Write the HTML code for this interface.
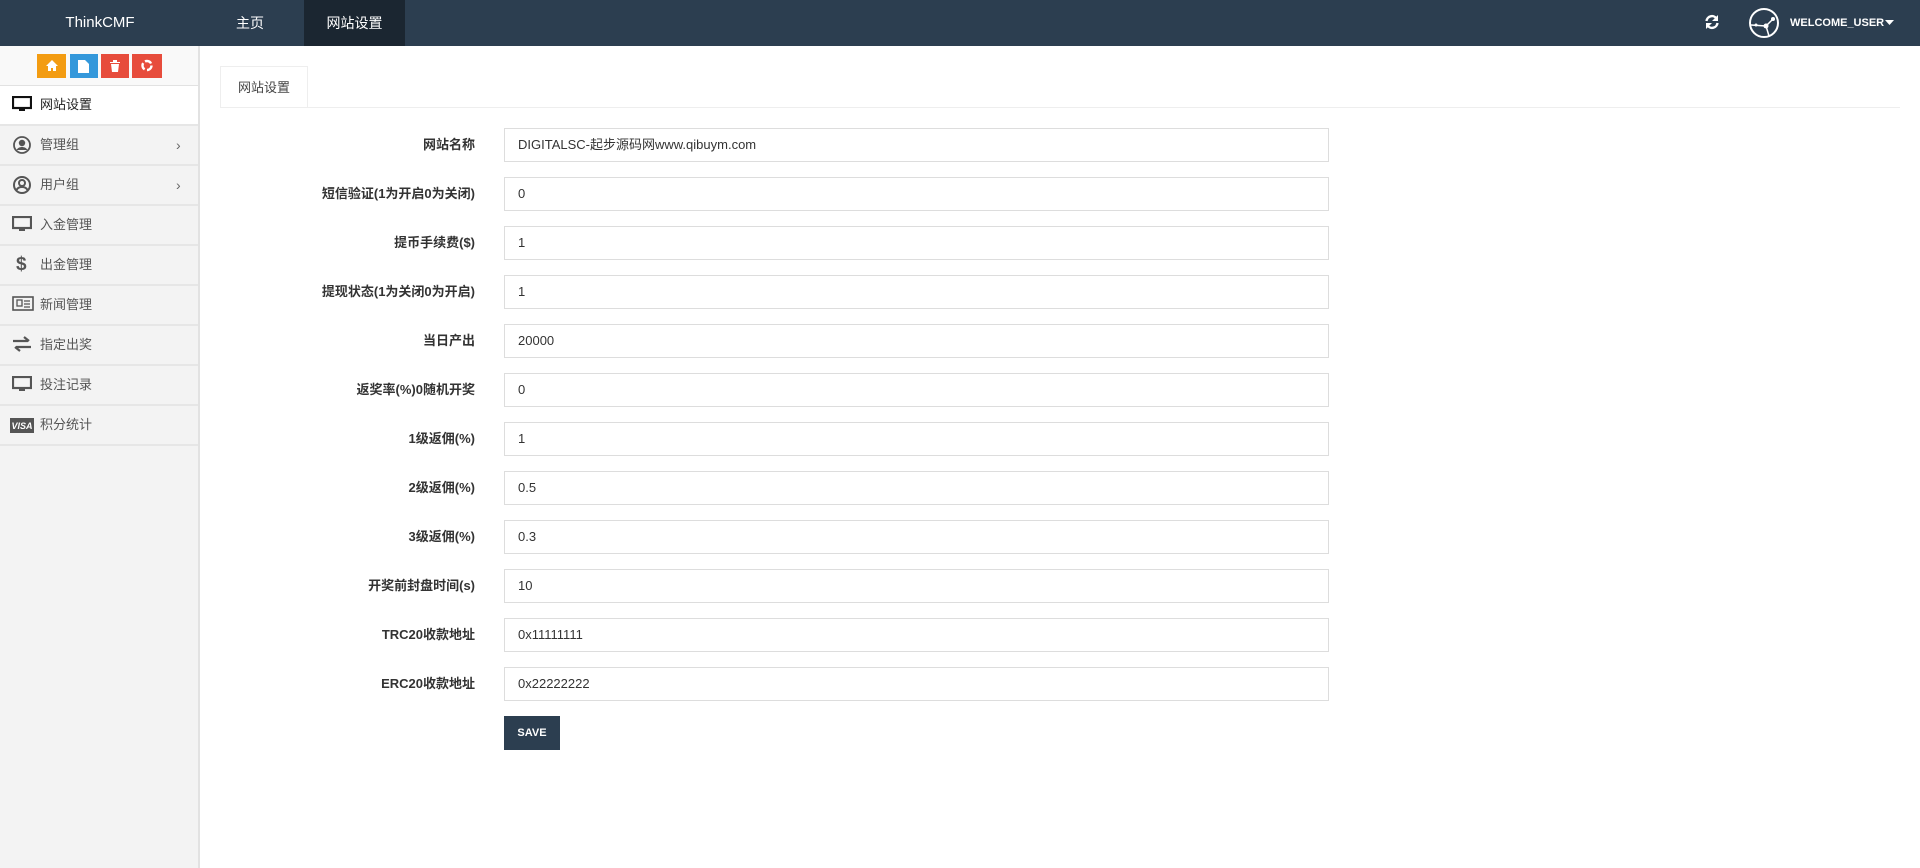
<!DOCTYPE html>
<html><head><meta charset="utf-8"><style>
*{margin:0;padding:0;box-sizing:border-box}
body{width:1920px;height:868px;overflow:hidden;background:#fff;font-family:"Liberation Sans","Noto Sans CJK SC",sans-serif;font-size:13px;color:#333;position:relative}
.hd{position:absolute;left:0;top:0;width:1920px;height:46px;background:#2c3e50}
.hd .logo{position:absolute;left:0;width:200px;top:0;line-height:46px;text-align:center;color:#fff;font-size:15px}
.hd .nav{position:absolute;top:0;height:46px;line-height:46px;color:#fff;font-size:14px;text-align:center}
.sb{position:absolute;left:0;top:46px;width:200px;height:822px;background:#f3f3f3;border-right:2px solid #e2e2e2}
.btns{height:40px;background:#f9f9f9;position:relative;border-bottom:1px solid #e2e2e2}
.btns span{position:absolute;top:8px;height:24px;width:29px}
.mi{height:40px;border-bottom:2px solid #e6e6e6;position:relative;font-size:13px;color:#555;line-height:38px;padding-left:40px}
.mi.act{background:#fff;color:#222}
.mi svg{position:absolute;left:12px;top:10px}
.mi .ar{position:absolute;left:176px;top:0;color:#666;font-size:14px}
.tab{position:absolute;left:220px;top:66px;width:88px;height:42px;border:1px solid #eee;border-bottom:1px solid #fff;background:#fff;text-align:center;line-height:42px;font-size:13px;color:#444}
.tline{position:absolute;left:220px;top:107px;width:1680px;height:1px;background:#eee}
.lb{position:absolute;right:1445px;font-weight:bold;font-size:13px;color:#333;line-height:34px;white-space:nowrap}
.in{position:absolute;left:504px;width:825px;height:34px;border:1px solid #ddd;line-height:32px;padding-left:13px;font-size:13px;color:#333}
.save{position:absolute;left:504px;top:716px;width:56px;height:34px;background:#2c3e50;color:#fff;font-weight:bold;font-size:11px;text-align:center;line-height:34px}
</style></head><body>
<div class="hd">
<div class="logo">ThinkCMF</div>
<div class="nav" style="left:220px;width:60px">主页</div>
<div class="nav" style="left:304px;width:101px;background:#1b2631">网站设置</div>
<svg style="position:absolute;left:1704px;top:14px" width="16" height="16" viewBox="0 0 16 16"><path d="M2.5 7A5.5 5.5 0 0 1 12.5 4.5M13.5 9A5.5 5.5 0 0 1 3.5 11.5" stroke="#fff" stroke-width="2.4" fill="none"/><path d="M14 1v6h-6zM2 15v-6h6z" fill="#fff"/></svg>
<svg style="position:absolute;left:1748px;top:7px" width="32" height="32" viewBox="0 0 32 32"><circle cx="16" cy="16" r="14" stroke="#fff" stroke-width="2" fill="none"/><path d="M3 18L18 19M18 19L25 12M18 19L21 29" stroke="#fff" stroke-width="1.5" fill="none"/><circle cx="18" cy="19" r="2.5" fill="#fff"/><circle cx="25" cy="12" r="2" fill="#fff"/><circle cx="8" cy="18" r="1.5" fill="#fff"/></svg>
<div style="position:absolute;left:1790px;top:0;line-height:46px;color:#fff;font-size:11px;font-weight:bold">WELCOME_USER</div>
<svg style="position:absolute;left:1885px;top:20px" width="9" height="6"><path d="M0 0h9L4.5 5z" fill="#fff"/></svg>
</div>
<div class="sb">
<div class="btns">
<span style="left:37px;background:#f39c12"></span>
<span style="left:70px;background:#3498db;width:28px"></span>
<span style="left:101px;background:#e74c3c;width:28px"></span>
<span style="left:132px;background:#e74c3c;width:30px"></span>
<svg style="position:absolute;left:46px;top:14px" width="12" height="11"><path d="M6 0L0 6h2v5h3V8h2v3h3V6h2z" fill="#fff"/></svg>
<svg style="position:absolute;left:78px;top:14px" width="11" height="13"><path d="M0 0h7l4 4v9H0z" fill="#fff"/></svg>
<svg style="position:absolute;left:110px;top:14px" width="10" height="12"><path d="M0 2h10v1H0zM3 0h4v2H3zM1 4h8l-1 8H2z" fill="#fff"/></svg>
<svg style="position:absolute;left:141px;top:13px" width="12" height="13"><circle cx="6" cy="6.5" r="4.5" stroke="#fff" stroke-width="2.4" fill="none" stroke-dasharray="7 2.5"/></svg>
</div>
<div class="mi act"><svg width="20" height="16" viewBox="0 0 20 16"><rect x="1" y="1" width="18" height="11" stroke="#111" stroke-width="2.2" fill="none"/><rect x="7" y="12" width="6" height="3" fill="#111"/></svg>网站设置</div>
<div class="mi"><svg width="20" height="20" viewBox="0 0 20 20" style="top:9px"><circle cx="10" cy="10" r="8" stroke="#555" stroke-width="1.8" fill="none"/><circle cx="10" cy="8" r="3.2" fill="#555"/><path d="M4.5 15c2-4 9-4 11 0" fill="#555"/></svg>管理组<span class="ar">›</span></div>
<div class="mi"><svg width="20" height="20" viewBox="0 0 20 20" style="top:9px"><circle cx="10" cy="10" r="8" stroke="#555" stroke-width="2" fill="none"/><circle cx="10" cy="8" r="3" stroke="#555" stroke-width="2" fill="none"/><path d="M4.5 15c2-4 9-4 11 0" stroke="#555" stroke-width="2" fill="none"/></svg>用户组<span class="ar">›</span></div>
<div class="mi"><svg width="20" height="16" viewBox="0 0 20 16"><rect x="1" y="1" width="18" height="11" stroke="#555" stroke-width="2.2" fill="none"/><rect x="7" y="12" width="6" height="3" fill="#555"/></svg>入金管理</div>
<div class="mi"><span style="position:absolute;left:16px;top:0;font-size:19px;color:#555;font-weight:bold">$</span>出金管理</div>
<div class="mi"><svg width="22" height="16" viewBox="0 0 22 16"><rect x="1" y="1" width="20" height="13" stroke="#555" stroke-width="1.6" fill="none"/><rect x="5" y="4" width="5" height="6" stroke="#555" stroke-width="1.3" fill="none"/><path d="M12 5h6M12 8h6M12 11h6" stroke="#555" stroke-width="1.3"/></svg>新闻管理</div>
<div class="mi"><svg width="20" height="16" viewBox="0 0 20 16"><path d="M1 5h15M12 1l5 4M19 11H4M8 15l-5-4" stroke="#555" stroke-width="2.2" fill="none"/></svg>指定出奖</div>
<div class="mi"><svg width="20" height="16" viewBox="0 0 20 16"><rect x="1" y="1" width="18" height="11" stroke="#555" stroke-width="2.2" fill="none"/><rect x="7" y="12" width="6" height="3" fill="#555"/></svg>投注记录</div>
<div class="mi"><svg width="24" height="16" viewBox="0 0 24 16" style="left:10px;top:12px"><rect width="24" height="15" fill="#555"/><text x="12" y="11" fill="#fff" font-size="9" font-weight="bold" font-style="italic" text-anchor="middle" font-family="Liberation Sans">VISA</text></svg>积分统计</div>
</div>
<div class="tab">网站设置</div>
<div class="tline"></div>
<div class="lb" style="top:128px">网站名称</div><div class="in" style="top:128px">DIGITALSC-起步源码网www.qibuym.com</div>
<div class="lb" style="top:177px">短信验证(1为开启0为关闭)</div><div class="in" style="top:177px">0</div>
<div class="lb" style="top:226px">提币手续费($)</div><div class="in" style="top:226px">1</div>
<div class="lb" style="top:275px">提现状态(1为关闭0为开启)</div><div class="in" style="top:275px">1</div>
<div class="lb" style="top:324px">当日产出</div><div class="in" style="top:324px">20000</div>
<div class="lb" style="top:373px">返奖率(%)0随机开奖</div><div class="in" style="top:373px">0</div>
<div class="lb" style="top:422px">1级返佣(%)</div><div class="in" style="top:422px">1</div>
<div class="lb" style="top:471px">2级返佣(%)</div><div class="in" style="top:471px">0.5</div>
<div class="lb" style="top:520px">3级返佣(%)</div><div class="in" style="top:520px">0.3</div>
<div class="lb" style="top:569px">开奖前封盘时间(s)</div><div class="in" style="top:569px">10</div>
<div class="lb" style="top:618px">TRC20收款地址</div><div class="in" style="top:618px">0x11111111</div>
<div class="lb" style="top:667px">ERC20收款地址</div><div class="in" style="top:667px">0x22222222</div>
<div class="save">SAVE</div>
</body></html>
